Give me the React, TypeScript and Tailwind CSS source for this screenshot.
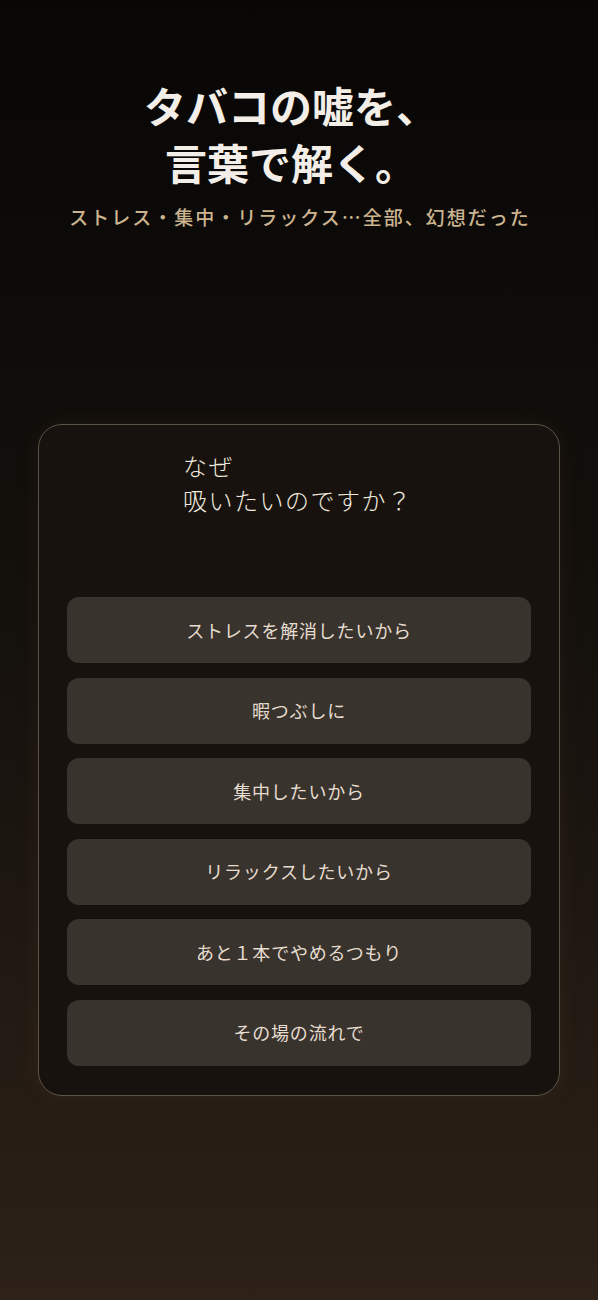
import React from "react";

const options = [
  "ストレスを解消したいから",
  "暇つぶしに",
  "集中したいから",
  "リラックスしたいから",
  "あと１本でやめるつもり",
  "その場の流れで",
];

export default function App() {
  return (
    <div
      className="min-h-[1300px] w-full bg-gradient-to-b from-[#080706] via-[#15110d] to-[#2d2118] flex flex-col items-center"
      style={{ fontFamily: '"Noto Sans CJK JP", "Noto Sans", sans-serif' }}
    >
      <h1 className="mt-[76px] pr-4 text-center text-[42px] leading-[57px] font-bold text-[#f3efe8]">
        タバコの嘘を、
        <br />
        言葉で解く。
      </h1>
      <p className="mt-[13px] pl-[2px] text-center text-[19px] leading-[28px] tracking-[2px] font-medium text-[#cbb48f]">
        ストレス・集中・リラックス…全部、幻想だった
      </p>

      <div className="mt-[193px] w-[522px] rounded-[24px] border border-[#5c5245] bg-[#17120e] px-[28px] pt-[24px] pb-[29px] shadow-[0_0_24px_rgba(200,160,110,0.07)]">
        <div className="pl-[116px] text-[24px] leading-[34px] tracking-[1.5px] font-light text-[#efe9df]">
          なぜ
          <br />
          吸いたいのですか？
        </div>
        <div className="mt-[80px] flex flex-col gap-[14.6px]">
          {options.map((o) => (
            <button
              key={o}
              className="h-[66px] w-full rounded-[12px] bg-[#39332d] text-[18px] tracking-[0.8px] text-[#e6ddd0] flex items-center justify-center"
            >
              {o}
            </button>
          ))}
        </div>
      </div>
    </div>
  );
}
